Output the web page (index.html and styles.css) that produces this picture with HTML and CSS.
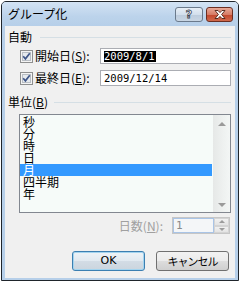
FILE: index.html
```html
<!DOCTYPE html>
<html lang="ja">
<head>
<meta charset="utf-8">
<link rel="stylesheet" href="styles.css">
</head>
<body>
<div class="win">
  <div class="titlebar">
    <span class="title">グループ化</span>
    <span class="tbtn help">?</span>
    <span class="tbtn close">
      <svg width="12" height="9" viewBox="0 0 12 9"><path d="M1 0.5 H4 L6 2.6 L8 0.5 H11 L7.6 4.5 L11 8.5 H8 L6 6.4 L4 8.5 H1 L4.4 4.5 Z" fill="#fff" stroke="#4a1f14" stroke-width="0.9" stroke-linejoin="round"/></svg>
    </span>
  </div>
  <div class="client">
    <div class="ghead"><span>自動</span><span class="rule r1"></span></div>
    <div class="row">
      <span class="cb"><svg width="13" height="13" viewBox="0 0 13 13"><rect x="0.5" y="0.5" width="12" height="12" fill="#f4f4f4" stroke="#8e8f8f"/><rect x="2.5" y="2.5" width="8" height="8" fill="#e6eaee" stroke="#b9bec4"/><path d="M3.2 6.3 L5.4 8.8 L9.8 3.2" fill="none" stroke="#3f5688" stroke-width="1.7"/></svg></span>
      <span class="lbl">開始日(<u>S</u>):</span>
      <span class="field"><span class="sel">2009/8/1</span></span>
    </div>
    <div class="row row2">
      <span class="cb"><svg width="13" height="13" viewBox="0 0 13 13"><rect x="0.5" y="0.5" width="12" height="12" fill="#f4f4f4" stroke="#8e8f8f"/><rect x="2.5" y="2.5" width="8" height="8" fill="#e6eaee" stroke="#b9bec4"/><path d="M3.2 6.3 L5.4 8.8 L9.8 3.2" fill="none" stroke="#3f5688" stroke-width="1.7"/></svg></span>
      <span class="lbl">最終日(<u>E</u>):</span>
      <span class="field"><span class="val">2009/12/14</span></span>
    </div>
    <div class="ghead g2"><span>単位(<u>B</u>)</span><span class="rule r2"></span></div>
    <div class="listbox">
      <ul class="items">
        <li>秒</li>
        <li>分</li>
        <li>時</li>
        <li>日</li>
        <li class="on">月</li>
        <li>四半期</li>
        <li>年</li>
      </ul>
      <div class="vscroll">
        <span class="arr up"></span>
        <span class="arr down"></span>
      </div>
    </div>
    <div class="days">
      <span class="dlbl">日数(<u>N</u>):</span>
      <span class="spin">
        <span class="spintext">1</span>
        <span class="spinbtns"><span class="sb"><span class="tri up"></span></span><span class="sb"><span class="tri down"></span></span></span>
      </span>
    </div>
    <div class="btns">
      <span class="btn ok">OK</span>
      <span class="btn cancel">キャンセル</span>
    </div>
  </div>
</div>
</body>
</html>
```
FILE: styles.css
```css
html, body {
  margin: 0;
  padding: 0;
  background: #ffffff;
}
body {
  width: 240px;
  height: 283px;
  overflow: hidden;
  font-family: "Noto Sans CJK JP", sans-serif;
  font-size: 12px;
  color: #000;
}
u { text-decoration: underline; text-underline-offset: 1px; }

.win {
  margin: 1px 1px 0 1px;
  width: 238px;
  height: 280px;
  box-sizing: border-box;
  border: 1px solid #1f252b;
  border-radius: 5px 5px 0 0;
  background: #b6cfe9;
  padding: 0 3px 2px 3px;
  display: flex;
  flex-direction: column;
}

.titlebar {
  margin: 0 -3px;
  height: 24px;
  flex: none;
  display: flex;
  align-items: flex-start;
  padding: 0 5px 0 6px;
  background: linear-gradient(#d3e3f4, #bcd3eb 60%, #b6cfe9);
  border-radius: 4px 4px 0 0;
}
.title {
  flex: 1;
  line-height: 12px;
  margin-top: 6px;
  font-size: 12px;
  color: #000;
}
.tbtn {
  margin-top: 5px;
  height: 15px;
  box-sizing: border-box;
  border: 1px solid #6b7a8c;
  border-radius: 3px;
  display: flex;
  align-items: center;
  justify-content: center;
}
.help {
  width: 28px;
  background: linear-gradient(#e7eef6, #d3dfec 50%, #bccbdc 51%, #c9d6e4);
  font-family: "DejaVu Sans", sans-serif;
  font-weight: bold;
  font-size: 11px;
  line-height: 11px;
  color: #fff;
  -webkit-text-stroke: 0.8px #3b4452;
}
.close {
  width: 27px;
  margin-left: 3px;
  border-color: #6b2e22;
  background: linear-gradient(#e8a998, #d67c66 50%, #c2452b 51%, #d0694c);
}

.client {
  flex: 1;
  background: #f0f0f0;
  padding: 0 4px 0 3px;
  display: flex;
  flex-direction: column;
}

.ghead {
  margin-top: 5px;
  height: 12px;
  line-height: 12px;
  display: flex;
  align-items: center;
}
.rule {
  flex: 1;
  height: 1px;
  background: #d5dfe5;
}
.r1 { margin-left: 8px; }
.r2 { margin-left: 6px; }
.g2 { margin-top: 10px; }

.row {
  margin-top: 5px;
  height: 16px;
  display: flex;
  align-items: center;
}
.row2 { margin-top: 6px; }
.cb {
  margin-left: 12px;
  width: 13px;
  height: 13px;
  display: block;
}
.cb svg { display: block; }
.lbl {
  margin-left: 2px;
  width: 65px;
  line-height: 12px;
}
.field {
  flex: 1;
  height: 16px;
  box-sizing: border-box;
  border: 1px solid #abadb3;
  background: #ffffff;
  padding-left: 3px;
  display: flex;
  align-items: center;
  font-family: "DejaVu Sans Mono", monospace;
  font-size: 10.5px;
}
.sel {
  background: #000;
  color: #fff;
  line-height: 11px;
  padding-right: 1px;
}
.val { line-height: 11px; }

.listbox {
  margin-top: 6px;
  margin-left: 11px;
  width: 212px;
  height: 99px;
  box-sizing: border-box;
  border: 1px solid #828790;
  background: #f6fbf9;
  display: flex;
}
.items {
  list-style: none;
  margin: 1px 1px 0 0;
  padding: 0;
  width: 192px;
}
.items li {
  height: 12px;
  line-height: 12px;
  padding-left: 3px;
}
.items li.on {
  background: #3399ff;
  color: #fff;
}
.vscroll {
  width: 17px;
  display: flex;
  flex-direction: column;
  justify-content: space-between;
  align-items: center;
  background: linear-gradient(90deg, #e6e8e7, #eef1f0 60%, #f3f6f5);
  padding: 7px 0 5px;
  box-sizing: border-box;
}
.arr {
  width: 0;
  height: 0;
  border-left: 4px solid transparent;
  border-right: 4px solid transparent;
}
.arr.up { border-bottom: 4px solid #9a9a9a; }
.arr.down { border-top: 4px solid #9a9a9a; }

.days {
  margin-top: 4px;
  height: 17px;
  display: flex;
  justify-content: flex-end;
  align-items: center;
  padding-right: 1px;
}
.dlbl {
  color: #a0a0a0;
  line-height: 12px;
  margin-right: 9px;
}
.spin {
  width: 58px;
  height: 17px;
  box-sizing: border-box;
  border: 1px solid #c6c6c6;
  display: flex;
  background: #f0f0f0;
}
.spintext {
  flex: 1;
  border: 1px solid #a9c4e6;
  padding-left: 2px;
  font-family: "DejaVu Sans Mono", monospace;
  font-size: 11px;
  line-height: 13px;
  color: #8a8a8a;
  background: #f4f6f8;
}
.spinbtns {
  width: 15px;
  display: flex;
  flex-direction: column;
}
.sb {
  flex: 1;
  display: flex;
  align-items: center;
  justify-content: center;
  background: linear-gradient(#f1f1f1, #e3e3e3);
  border: 1px solid #d4d4d4;
}
.tri {
  width: 0;
  height: 0;
  border-left: 3px solid transparent;
  border-right: 3px solid transparent;
}
.tri.up { border-bottom: 3px solid #9c9c9c; }
.tri.down { border-top: 3px solid #9c9c9c; }

.btns {
  margin-top: 17px;
  height: 20px;
  display: flex;
  justify-content: flex-end;
  padding-right: 2px;
}
.btn {
  width: 73px;
  height: 20px;
  box-sizing: border-box;
  border-radius: 3px;
  display: flex;
  align-items: center;
  justify-content: center;
  line-height: 12px;
}
.ok {
  border: 1px solid #3c7fb1;
  box-shadow: inset 0 0 0 1px #a3d4ef;
  background: linear-gradient(#eef3f7, #e1e9f0 50%, #d3dce5 51%, #cbd5de);
  font-family: "DejaVu Sans", sans-serif;
  font-size: 11px;
}
.cancel {
  margin-left: 11px;
  border: 1px solid #707070;
  background: linear-gradient(#f2f2f2, #ebebeb 50%, #dddddd 51%, #cfcfcf);
  font-size: 11px;
  letter-spacing: -1px;
}
```
